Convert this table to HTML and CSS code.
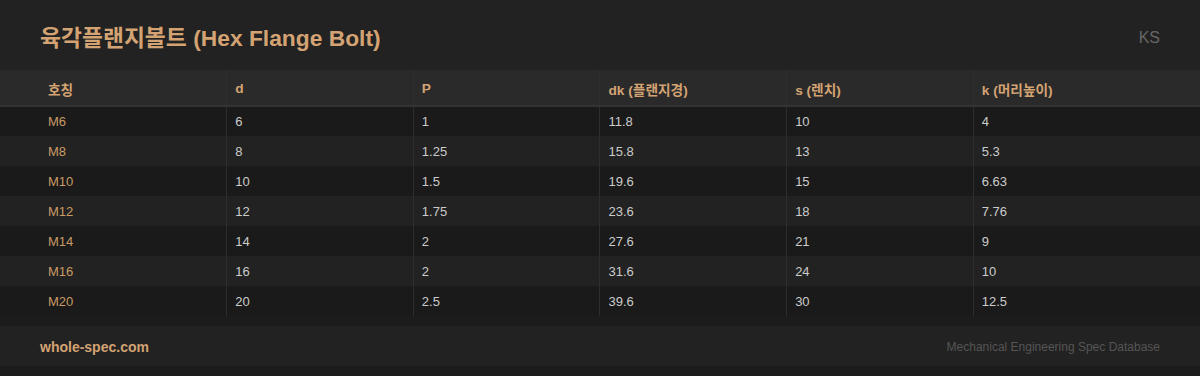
FILE: index.html
```html
<!DOCTYPE html>
<html lang="ko">
<head>
<meta charset="utf-8">
<link rel="stylesheet" href="styles.css">
</head>
<body>
<div class="page">
  <header class="top">
    <h1 class="title">육각플랜지볼트 (Hex Flange Bolt)</h1>
    <span class="std">KS</span>
  </header>
  <table class="spec">
    <colgroup>
      <col class="c-edge"><col class="c-mid"><col class="c-mid"><col class="c-mid"><col class="c-mid"><col class="c-edge">
    </colgroup>
    <thead>
      <tr><th>호칭</th><th>d</th><th>P</th><th>dk (플랜지경)</th><th>s (렌치)</th><th>k (머리높이)</th></tr>
    </thead>
    <tbody>
      <tr><td>M6</td><td>6</td><td>1</td><td>11.8</td><td>10</td><td>4</td></tr>
      <tr><td>M8</td><td>8</td><td>1.25</td><td>15.8</td><td>13</td><td>5.3</td></tr>
      <tr><td>M10</td><td>10</td><td>1.5</td><td>19.6</td><td>15</td><td>6.63</td></tr>
      <tr><td>M12</td><td>12</td><td>1.75</td><td>23.6</td><td>18</td><td>7.76</td></tr>
      <tr><td>M14</td><td>14</td><td>2</td><td>27.6</td><td>21</td><td>9</td></tr>
      <tr><td>M16</td><td>16</td><td>2</td><td>31.6</td><td>24</td><td>10</td></tr>
      <tr><td>M20</td><td>20</td><td>2.5</td><td>39.6</td><td>30</td><td>12.5</td></tr>
    </tbody>
  </table>
  <footer class="foot">
    <span class="brand">whole-spec.com</span>
    <span class="tag">Mechanical Engineering Spec Database</span>
  </footer>
</div>
</body>
</html>
```
FILE: styles.css
```css
* { box-sizing: border-box; }
html, body { margin: 0; padding: 0; }
body {
  background: #1c1c1c;
  font-family: "Liberation Sans", Arial, "Noto Sans CJK KR", sans-serif;
  width: 1200px;
  height: 376px;
  overflow: hidden;
}
.page { display: flex; flex-direction: column; }
.top {
  height: 70px;
  background: #222222;
  display: flex;
  align-items: center;
  justify-content: space-between;
  padding: 0 40px;
}
.title {
  margin: 0;
  font-size: 22.8px;
  font-weight: bold;
  color: #d4a373;
  padding-top: 2px;
}
.std { font-size: 16px; color: #666; padding-top: 6px; }
.spec {
  width: 1200px;
  border-collapse: collapse;
  table-layout: fixed;
}
.c-edge { width: 226.67px; }
.c-mid { width: 186.67px; }
.spec th, .spec td {
  text-align: left;
  padding: 0 8px;
  font-size: 13px;
  border-left: 1px solid #2e2e2e;
}
.spec th:first-child, .spec td:first-child { padding-left: 48px; border-left: none; }
.spec th {
  height: 36px;
  background: #2a2a2a;
  color: #d4a373;
  font-size: 13.7px;
  font-weight: bold;
  border-bottom: 2px solid #333;
  padding-top: 2px;
}
.spec td {
  height: 30px;
  color: #cccccc;
}
.spec td:first-child { color: #c89a66; }
.spec tbody tr:nth-child(odd) { background: #1a1a1a; }
.spec tbody tr:nth-child(even) { background: #222222; }
.foot {
  margin-top: 10px;
  height: 40px;
  background: #222222;
  display: flex;
  align-items: center;
  justify-content: space-between;
  padding: 0 40px;
}
.brand { font-size: 14px; font-weight: bold; color: #d4a373; padding-top: 1px; }
.tag { font-size: 12px; color: #555; padding-top: 1px; }
```
